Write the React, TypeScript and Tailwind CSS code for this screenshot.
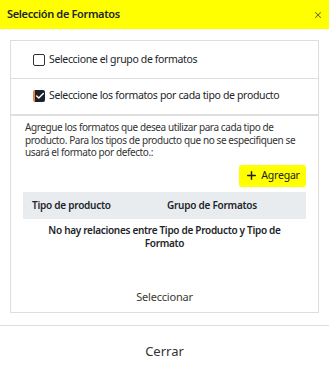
import { X, Plus, Check } from "lucide-react";

export default function App() {
  return (
    <div className="flex h-[374px] w-[329px] flex-col bg-white text-[#212529]" style={{ fontFamily: '"Noto Sans", "Open Sans", sans-serif' }}>
      {/* Header */}
      <div className="flex h-[29px] shrink-0 items-center justify-between bg-[#ffff00] pl-[7px] pr-[6px]">
        <span className="text-[11px] font-semibold tracking-[-0.35px]">Selección de Formatos</span>
        <X className="h-[10px] w-[10px] text-[#6b6b2a]" strokeWidth={2.5} />
      </div>

      {/* Body */}
      <div className="px-[10px] pt-[11px]">
        <div className="flex h-[273px] flex-col border border-[#dedede]">
          <div className="flex h-[37px] items-center gap-[4px] pl-[22px] pt-[1px]">
            <span className="h-[12px] w-[12px] rounded-[2px] border border-[#333]" />
            <span className="text-[10.5px] tracking-[-0.35px]">Seleccione el grupo de formatos</span>
          </div>
          <div className="flex h-[36px] items-center gap-[4px] border-t border-[#dedede] pl-[22px] pb-[2px]">
            <span className="flex h-[12px] w-[12px] items-center justify-center rounded-[2px] border-l-2 border-[#e08a3c] bg-[#1f1f2e]">
              <Check className="h-[10px] w-[10px] text-white" strokeWidth={3.5} />
            </span>
            <span className="text-[10.5px] tracking-[-0.35px]">Seleccione los formatos por cada tipo de producto</span>
          </div>
          <div className="flex flex-1 flex-col border-t-2 border-[#dedede] px-[12px] pt-[5px]">
            <p className="pl-[2px] text-[10px] leading-[12.5px] tracking-[-0.4px] text-[#333]">
              Agregue los formatos que desea utilizar para cada tipo de producto. Para los tipos de producto que no se especifiquen se usará el formato por defecto.:
            </p>
            <div className="mt-[6px] flex justify-end">
              <button className="flex h-[22px] w-[67px] items-center justify-center gap-[3px] rounded-[3px] bg-[#ffff00] text-[10.5px] tracking-[-0.2px] text-[#222]">
                <Plus className="h-[13px] w-[13px]" strokeWidth={2.75} />
                Agregar
              </button>
            </div>
            <div className="mt-[5px] grid h-[27px] grid-cols-[135px_1fr] items-center bg-[#e9ecef] px-[9px] text-[10px] font-semibold tracking-[-0.25px]">
              <span>Tipo de producto</span>
              <span>Grupo de Formatos</span>
            </div>
            <p className="mt-[5px] px-[14px] text-center text-[10px] font-semibold leading-[13px] tracking-[-0.3px]">
              No hay relaciones entre Tipo de Producto y Tipo de Formato
            </p>
            <div className="mt-[39px] text-center text-[11px] tracking-[-0.2px] text-[#3a3a30]">Seleccionar</div>
          </div>
        </div>
      </div>

      {/* Footer */}
      <div className="mt-[12px] flex flex-1 items-center justify-center border-t border-[#dedede] pt-[4px]">
        <span className="text-[13px] text-[#333]">Cerrar</span>
      </div>
    </div>
  );
}
